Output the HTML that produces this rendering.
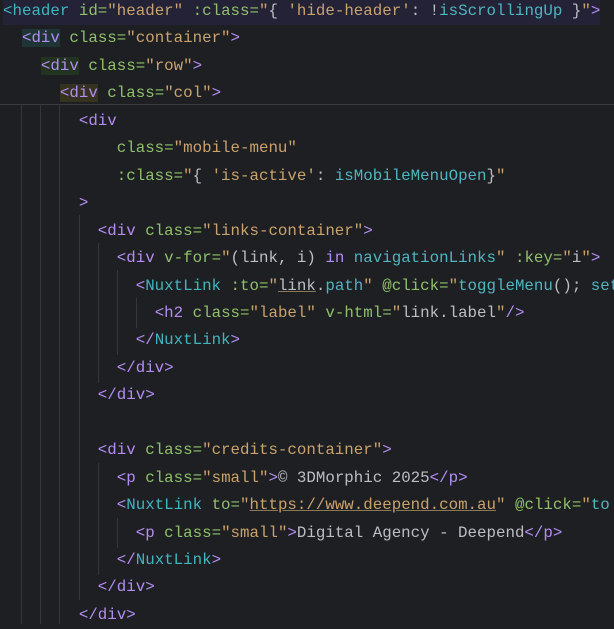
<!DOCTYPE html>
<html><head><meta charset="utf-8"><style>
body{margin:0;width:614px;height:624px;background:#1e1f22;overflow:hidden;position:relative;font-family:"Liberation Mono",monospace;font-size:15.8px;color:#bcbec4}
.l{position:absolute;left:3px;height:27.45px;line-height:27.45px;white-space:pre;margin-top:2px}
.p{color:#b38df2}.t{color:#3fb6bf}.a{color:#8fc06b}.s{color:#c9a26d}.i{color:#4fb5c0}.w{color:#bcbec4}
.u{text-decoration:underline;text-decoration-color:#8a7a5a}
.g{position:absolute;width:1px;background:#34363a}
.sep{position:absolute;left:0;right:0;top:104px;height:1px;background:#3a3b3f}
</style></head><body>
<div class="g" style="left:21px;top:105px;height:519px"></div>
<div class="g" style="left:40px;top:105px;height:519px"></div>
<div class="g" style="left:59px;top:105px;height:519px"></div>
<div class="g" style="left:79px;top:215px;height:385px"></div>
<div class="g" style="left:98px;top:243px;height:140px"></div>
<div class="g" style="left:117px;top:270px;height:85px"></div>
<div class="g" style="left:136px;top:298px;height:30px"></div>
<div class="g" style="left:98px;top:463px;height:112px"></div>
<div class="g" style="left:117px;top:518px;height:30px"></div>
<div class="sep"></div>
<div class="l" style="top:-4px;background:#232236"><span class="t">&lt;header</span> <span class="a">id=</span><span class="s">"header"</span> <span class="a">:class=</span><span class="s">"</span><span class="w">{ </span><span class="s">'hide-header'</span><span class="w">: !</span><span class="i">isScrollingUp</span><span class="w"> }</span><span class="s">"</span><span class="p">&gt;</span></div>
<div class="l" style="top:23.45px">  <span class="p" style="background:#1f3535">&lt;div</span> <span class="a">class=</span><span class="s">"container"</span><span class="p">&gt;</span></div>
<div class="l" style="top:50.9px">    <span class="p" style="background:#22331f">&lt;div</span> <span class="a">class=</span><span class="s">"row"</span><span class="p">&gt;</span></div>
<div class="l" style="top:78.35px">      <span class="p" style="background:#35321f">&lt;div</span> <span class="a">class=</span><span class="s">"col"</span><span class="p">&gt;</span></div>
<div class="l" style="top:105.8px">        <span class="p">&lt;div</span></div>
<div class="l" style="top:133.25px">            <span class="a">class=</span><span class="s">"mobile-menu"</span></div>
<div class="l" style="top:160.7px">            <span class="a">:class=</span><span class="s">"</span>{ <span class="s">'is-active'</span>: <span class="i">isMobileMenuOpen</span>}<span class="s">"</span></div>
<div class="l" style="top:188.15px">        <span class="p">&gt;</span></div>
<div class="l" style="top:215.6px">          <span class="p">&lt;div</span> <span class="a">class=</span><span class="s">"links-container"</span><span class="p">&gt;</span></div>
<div class="l" style="top:243.05px">            <span class="p">&lt;div</span> <span class="a">v-for=</span><span class="s">"</span>(link, i) <span class="p">in</span> <span class="i">navigationLinks</span><span class="s">"</span> <span class="a">:key=</span><span class="s">"</span>i<span class="s">"</span><span class="p">&gt;</span></div>
<div class="l" style="top:270.5px">              <span class="p">&lt;</span><span class="t">NuxtLink</span> <span class="a">:to=</span><span class="s">"</span><span class="u">link</span>.<span class="i">path</span><span class="s">"</span> <span class="a">@click=</span><span class="s">"</span><span class="i">toggleMenu</span>(); <span class="i">set</span></div>
<div class="l" style="top:297.95px">                <span class="p">&lt;h2</span> <span class="a">class=</span><span class="s">"label"</span> <span class="a">v-html=</span><span class="s">"</span>link.label<span class="s">"</span><span class="p">/&gt;</span></div>
<div class="l" style="top:325.4px">              <span class="p">&lt;/</span><span class="t">NuxtLink</span><span class="p">&gt;</span></div>
<div class="l" style="top:352.85px">            <span class="p">&lt;/div&gt;</span></div>
<div class="l" style="top:380.3px">          <span class="p">&lt;/div&gt;</span></div>
<div class="l" style="top:435.2px">          <span class="p">&lt;div</span> <span class="a">class=</span><span class="s">"credits-container"</span><span class="p">&gt;</span></div>
<div class="l" style="top:462.65px">            <span class="p">&lt;p</span> <span class="a">class=</span><span class="s">"small"</span><span class="p">&gt;</span>© 3DMorphic 2025<span class="p">&lt;/p&gt;</span></div>
<div class="l" style="top:490.1px">            <span class="p">&lt;</span><span class="t">NuxtLink</span> <span class="a">to=</span><span class="s">"<span class="u">https://www.deepend.com.au</span>"</span> <span class="a">@click=</span><span class="s">"</span><span class="i">to</span></div>
<div class="l" style="top:517.55px">              <span class="p">&lt;p</span> <span class="a">class=</span><span class="s">"small"</span><span class="p">&gt;</span>Digital Agency - Deepend<span class="p">&lt;/p&gt;</span></div>
<div class="l" style="top:545px">            <span class="p">&lt;/</span><span class="t">NuxtLink</span><span class="p">&gt;</span></div>
<div class="l" style="top:572.45px">          <span class="p">&lt;/div&gt;</span></div>
<div class="l" style="top:599.9px">        <span class="p">&lt;/div&gt;</span></div>
</body></html>
